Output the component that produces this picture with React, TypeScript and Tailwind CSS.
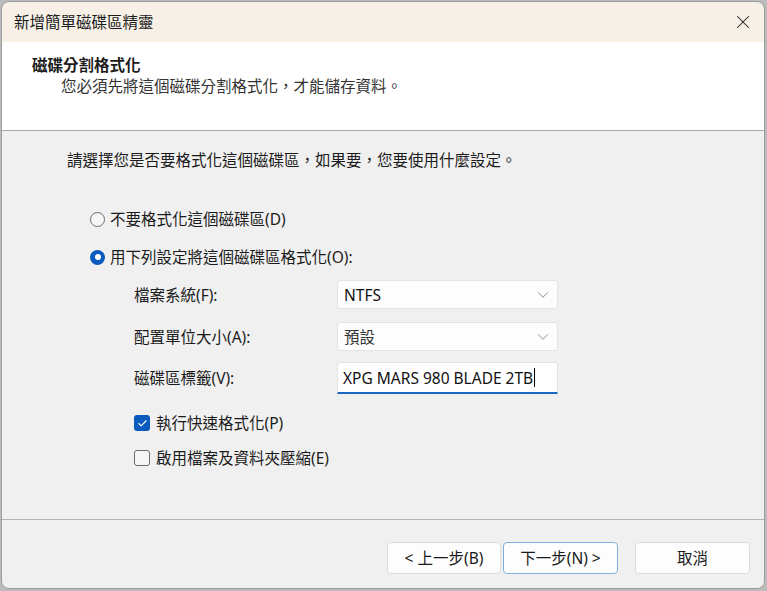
import { Check, ChevronDown, X } from 'lucide-react'

const font = { fontFamily: '"Noto Sans", "Noto Sans CJK TC", sans-serif' }

function Radio({ checked, label }: { checked?: boolean; label: string }) {
  return (
    <div className="flex h-[20px] items-center">
      {checked ? (
        <span className="flex h-[15px] w-[15px] items-center justify-center rounded-full bg-[#0a5bbd]">
          <span className="h-[6px] w-[6px] rounded-full bg-white" />
        </span>
      ) : (
        <span className="h-[15px] w-[15px] rounded-full border border-[#6b6b6b] bg-[#f6f6f6]" />
      )}
      <span className="ml-[5px]">{label}</span>
    </div>
  )
}

function Checkbox({ checked, label }: { checked?: boolean; label: string }) {
  return (
    <div className="flex h-[20px] items-center">
      {checked ? (
        <span className="flex h-[16px] w-[16px] items-center justify-center rounded-[3px] bg-[#0a5bbd]">
          <Check className="h-[11px] w-[11px] text-white" strokeWidth={2.5} />
        </span>
      ) : (
        <span className="h-[16px] w-[16px] rounded-[3px] border border-[#6b6b6b] bg-[#f6f6f6]" />
      )}
      <span className="ml-[6px]">{label}</span>
    </div>
  )
}

function Select({ value, dim }: { value: string; dim?: boolean }) {
  return (
    <div className="flex h-[29px] w-[221px] items-center justify-between rounded-[3px] border border-[#e4e4e4] bg-[#fdfdfd] pl-[6px] pr-[5px]">
      <span className={dim ? 'text-[#333]' : 'text-[#111]'}>{value}</span>
      <ChevronDown className="h-[18px] w-[18px] text-[#8a8a8a]" strokeWidth={1.3} />
    </div>
  )
}

function Button({ label, primary, className }: { label: string; primary?: boolean; className?: string }) {
  return (
    <button
      className={`flex h-[32px] items-center justify-center rounded-[4px] border bg-[#fdfdfd] text-[#1a1a1a] ${
        primary ? 'border-[#80aee0]' : 'border-[#dcdcdc]'
      } ${className ?? ''}`}
    >
      {label}
    </button>
  )
}

export default function App() {
  return (
    <div lang="zh-TW" className="h-[591px] w-[767px] bg-[#bcbcbc] pl-[1px] pt-[1px]" style={font}>
      <div className="flex h-[588px] w-[764px] flex-col overflow-hidden rounded-[8px] border border-[#9c9c9c] text-[15.5px] leading-[20px] text-[#1b1b1b]">
        {/* title bar */}
        <div className="flex h-[40px] shrink-0 items-center justify-between bg-[#f6f0e7] pl-[12px] pr-[10px]">
          <span>新增簡單磁碟區精靈</span>
          <X className="h-[22px] w-[22px] text-[#222]" strokeWidth={1.1} />
        </div>

        {/* header */}
        <div className="h-[89px] shrink-0 border-b border-[#a8a8a8] bg-white pt-[13px]">
          <div className="pl-[30px] font-bold">磁碟分割格式化</div>
          <div className="mt-[1px] pl-[59px] text-[#333]">您必須先將這個磁碟分割格式化，才能儲存資料。</div>
        </div>

        {/* body */}
        <div className="flex-1 bg-[#f0f0f0] pt-[19px]">
          <div className="pl-[65px]">請選擇您是否要格式化這個磁碟區，如果要，您要使用什麼設定。</div>

          <div className="mt-[39px] flex flex-col gap-[18px] pl-[88px]">
            <Radio label="不要格式化這個磁碟區(D)" />
            <Radio checked label="用下列設定將這個磁碟區格式化(O):" />
          </div>

          <div className="mt-[13px] pl-[132px]">
            <div className="flex items-center">
              <span className="w-[203px]">檔案系統(F):</span>
              <Select value="NTFS" />
            </div>
            <div className="mt-[13px] flex items-center">
              <span className="w-[203px]">配置單位大小(A):</span>
              <Select value="預設" dim />
            </div>
            <div className="mt-[11px] flex items-center">
              <span className="w-[203px]">磁碟區標籤(V):</span>
              <div className="flex h-[32px] w-[221px] items-center rounded-t-[3px] border border-b-2 border-[#e4e4e4] border-b-[#1a66c2] bg-white pl-[5px] text-[#111]">
                XPG MARS 980 BLADE 2TB
                <span className="ml-[1px] h-[19px] w-[1px] bg-black" />
              </div>
            </div>

            <div className="mt-[19px] flex flex-col gap-[15px]">
              <Checkbox checked label="執行快速格式化(P)" />
              <Checkbox label="啟用檔案及資料夾壓縮(E)" />
            </div>
          </div>
        </div>

        {/* footer */}
        <div className="flex h-[69px] shrink-0 items-start justify-end border-t border-[#b4b4b4] bg-[#f0f0f0] pr-[14px] pt-[22px]">
          <Button label="< 上一步(B)" className="w-[114px]" />
          <Button label="下一步(N) >" primary className="ml-[2px] w-[115px]" />
          <Button label="取消" className="ml-[17px] w-[115px]" />
        </div>
      </div>
    </div>
  )
}
